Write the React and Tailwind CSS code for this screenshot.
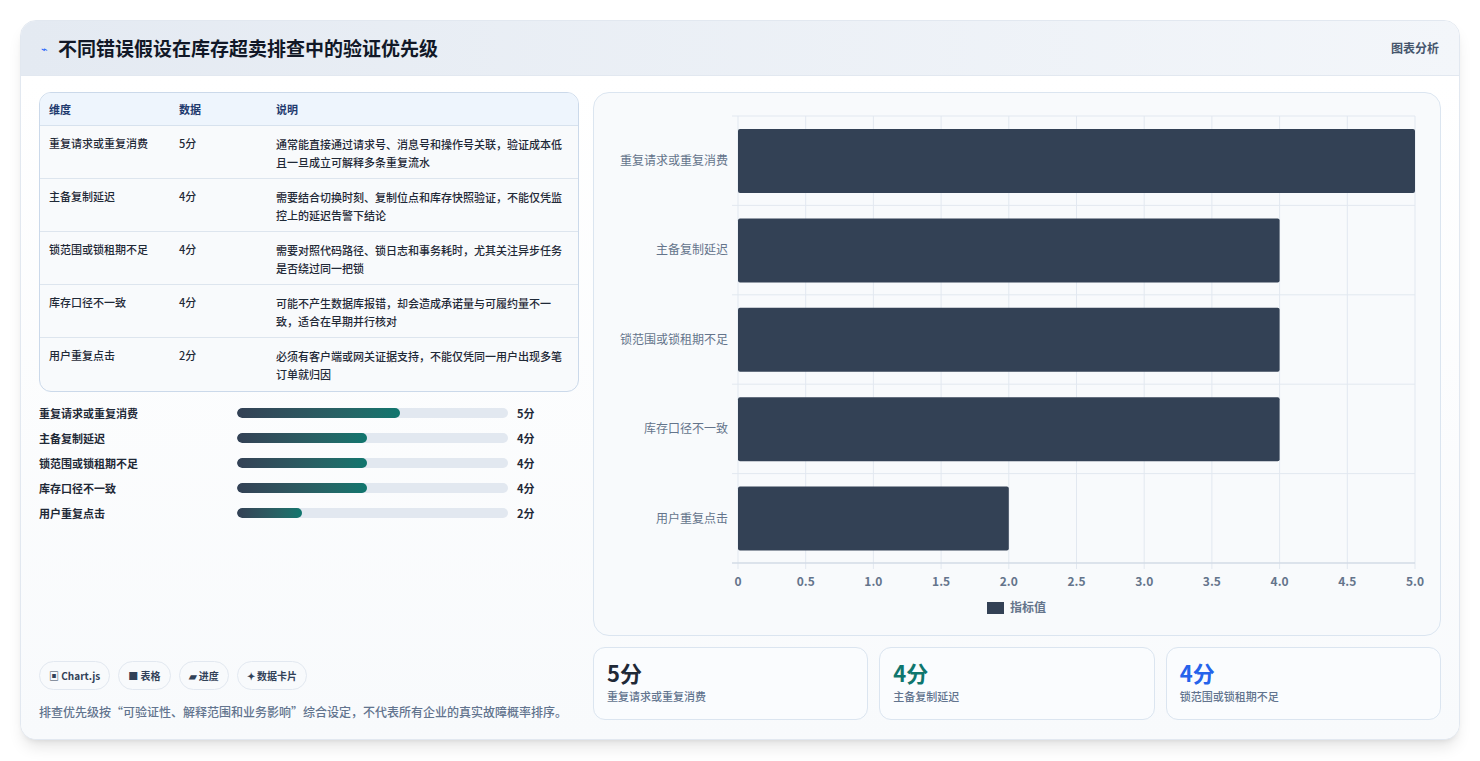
const rows = [
  ["重复请求或重复消费", 5, "通常能直接通过请求号、消息号和操作号关联，验证成本低且一旦成立可解释多条重复流水"],
  ["主备复制延迟", 4, "需要结合切换时刻、复制位点和库存快照验证，不能仅凭监控上的延迟告警下结论"],
  ["锁范围或锁租期不足", 4, "需要对照代码路径、锁日志和事务耗时，尤其关注异步任务是否绕过同一把锁"],
  ["库存口径不一致", 4, "可能不产生数据库报错，却会造成承诺量与可履约量不一致，适合在早期并行核对"],
  ["用户重复点击", 2, "必须有客户端或网关证据支持，不能仅凭同一用户出现多笔订单就归因"],
];

function Chart() {
  const x0 = 144, x1 = 821, y0 = 23, band = 89.4, sc = (x1 - x0) / 5;
  const ticks = [0, 0.5, 1, 1.5, 2, 2.5, 3, 3.5, 4, 4.5, 5];
  return (
    <svg width="846" height="544" className="block">
      {ticks.map((t) => (
        <line key={t} x1={x0 + t * sc} x2={x0 + t * sc} y1={y0} y2={470 + 6} stroke="#e2e8f0" />
      ))}
      {[0, 1, 2, 3, 4, 5].map((i) => (
        <line key={i} x1={x0 - 6} x2={x1} y1={y0 + i * band} y2={y0 + i * band} stroke="#e2e8f0" />
      ))}
      <line x1={x0 - 6} x2={x1} y1={470} y2={470} stroke="#cbd5e1" />
      {rows.map((r, i) => (
        <g key={i}>
          <rect x={x0} y={y0 + i * band + 13} width={r[1] * sc} height={64} rx="2" fill="#334155" />
          <text x={x0 - 10} y={y0 + i * band + 49} textAnchor="end" fontSize="12" fill="#64748b">{r[0]}</text>
        </g>
      ))}
      {ticks.map((t) => (
        <text key={t} x={x0 + t * sc} y={493} textAnchor="middle" fontSize="12" fontWeight="600" fill="#64748b">{t === 0 ? "0" : t.toFixed(1)}</text>
      ))}
      <rect x="393" y="509" width="17" height="12" fill="#334155" />
      <text x="416" y="519" fontSize="12" fontWeight="600" fill="#64748b">指标值</text>
    </svg>
  );
}

export default function App() {
  return (
    <div className="min-h-[761px] bg-white p-5 pb-0" style={{ fontFamily: '"Noto Sans CJK SC", "Noto Sans", sans-serif' }}>
      <div className="h-[720px] rounded-2xl border border-slate-200 bg-white shadow-lg overflow-hidden flex flex-col">
        <div className="h-[55px] flex items-center justify-between px-5 bg-gradient-to-r from-[#e4eaf2] to-[#f3f6fa] border-b border-slate-200">
          <div className="flex items-center gap-2.5">
            <span className="text-blue-600 text-[11px]">⌁</span>
            <span className="text-[19px] font-bold text-[#111827]">不同错误假设在库存超卖排查中的验证优先级</span>
          </div>
          <span className="text-[12px] font-semibold text-slate-600">图表分析</span>
        </div>
        <div className="flex-1 flex gap-[14px] px-[18px] pt-4 pb-[18px] bg-gradient-to-b from-white to-[#f8fafc]">
          <div className="w-[541px] flex flex-col">
            <div className="rounded-xl border border-[#cbd9ea] overflow-hidden bg-[#f8fafc]">
              <div className="flex h-[33px] items-center bg-[#eef5fd] border-b border-[#d7e2ee] text-[11px] font-semibold text-[#1e3a6e]">
                <div className="w-[139px] pl-[9px]">维度</div>
                <div className="w-[97px]">数据</div>
                <div>说明</div>
              </div>
              {rows.map((r, i) => (
                <div key={i} className={`flex h-[53px] pt-[9px] text-[11px] text-[#1f2937] ${i < 4 ? "border-b border-[#dde5ee]" : ""}`}>
                  <div className="w-[139px] pl-[9px] font-medium">{r[0]}</div>
                  <div className="w-[97px] font-medium">{r[1]}分</div>
                  <div className="w-[292px] leading-[18px] font-medium">{r[2]}</div>
                </div>
              ))}
            </div>
            <div className="flex flex-col gap-[11px] mt-[14px]">
              {rows.map((r, i) => (
                <div key={i} className="flex items-center h-[14px] text-[11px] font-semibold text-[#1f2937]">
                  <div className="w-[198px]">{r[0]}</div>
                  <div className="w-[271px] h-[10px] rounded-full bg-[#e2e8f0] overflow-hidden">
                    <div className="h-full rounded-full bg-gradient-to-r from-[#334155] to-[#0f766e]" style={{ width: `${r[1] * 20 * 0.6}%` }} />
                  </div>
                  <div className="ml-[9px] font-bold">{r[1]}分</div>
                </div>
              ))}
            </div>
            <div className="flex-1" />
            <div className="flex gap-2">
              {["▣ Chart.js", "■ 表格", "▰ 进度", "✦ 数据卡片"].map((c) => (
                <span key={c} className="h-[29px] px-[9px] flex items-center rounded-full border border-slate-200 bg-[#f8fafc] text-[10px] font-semibold text-slate-700">{c}</span>
              ))}
            </div>
            <p className="mt-3 text-[12px] leading-[19px] font-medium text-slate-500">排查优先级按“可验证性、解释范围和业务影响”综合设定，不代表所有企业的真实故障概率排序。</p>
          </div>
          <div className="flex-1 flex flex-col gap-[11px]">
            <div className="h-[544px] rounded-2xl border border-[#dbe5f0] bg-[#f8fafc]">
              <Chart />
            </div>
            <div className="flex gap-[11px]">
              {[["5分", "text-[#1f2937]", rows[0][0]], ["4分", "text-[#0f766e]", rows[1][0]], ["4分", "text-[#2563eb]", rows[2][0]]].map(([v, c, l], i) => (
                <div key={i} className="flex-1 h-[73px] rounded-xl border border-[#dbe5f0] bg-[#fafcfe] px-[13px] pt-[10px]">
                  <div className={`text-[22px] leading-[28px] font-bold ${c}`}>{v}</div>
                  <div className="text-[11px] text-slate-500 font-medium mt-0.5">{l}</div>
                </div>
              ))}
            </div>
          </div>
        </div>
      </div>
    </div>
  );
}
